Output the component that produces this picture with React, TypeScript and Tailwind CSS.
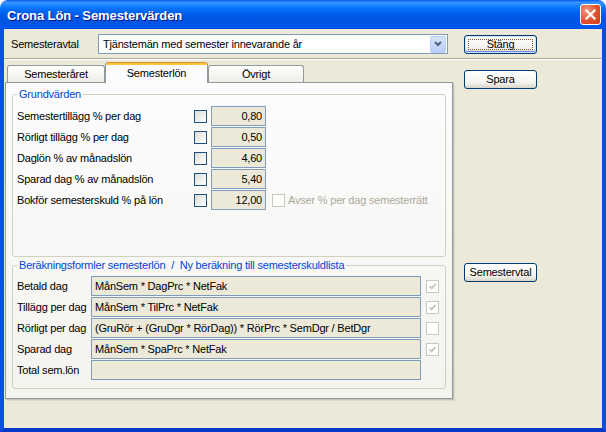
import React from 'react'

const font = "font-['Liberation_Sans',Arial,sans-serif]"

function Check({ disabled, checked }: { disabled?: boolean; checked?: boolean }) {
  if (disabled) {
    return (
      <span className="flex h-[13px] w-[13px] shrink-0 items-center justify-center border border-[#cac8bb] bg-white">
        {checked && (
          <svg width="9" height="9" viewBox="0 0 9 9">
            <path d="M1.5 4.2 L3.5 6.4 L7.6 2" stroke="#c4c2b4" strokeWidth="1.7" fill="none" />
          </svg>
        )}
      </span>
    )
  }
  return <span className="h-[13px] w-[13px] shrink-0 border border-[#1c5180] bg-[linear-gradient(135deg,#dcdcd7,#ffffff)]" />
}

function XpButton({ label, isDefault }: { label: string; isDefault?: boolean }) {
  return (
    <button
      className={
        isDefault
          ? 'relative flex h-[19px] w-[73px] items-center justify-center rounded-[3px] border border-[#003c74] bg-[linear-gradient(to_bottom,#ffffff,#f3f3ee_70%,#d8d3c7)] text-[11px] text-black shadow-[inset_0_0_0_1px_#cee7ff,inset_0_-1px_0_1px_#6982ee]'
          : 'flex h-[19px] w-[73px] items-center justify-center rounded-[3px] border border-[#003c74] bg-[linear-gradient(to_bottom,#ffffff,#f3f3ee_70%,#d8d3c7)] text-[11px] text-black'
      }
    >
      {isDefault && <span className="absolute inset-[3px] border border-dotted border-[#7a5a30]" />}
      <span className="relative tracking-[-0.2px]">{label}</span>
    </button>
  )
}

const grund = [
  { label: 'Semestertillägg % per dag', value: '0,80' },
  { label: 'Rörligt tillägg % per dag', value: '0,50' },
  { label: 'Daglön % av månadslön', value: '4,60' },
  { label: 'Sparad dag % av månadslön', value: '5,40' },
  { label: 'Bokför semesterskuld % på lön', value: '12,00', extra: true },
]

const formler = [
  { label: 'Betald dag', value: 'MånSem * DagPrc * NetFak', check: 'on' },
  { label: 'Tillägg per dag', value: 'MånSem * TilPrc * NetFak', check: 'on' },
  { label: 'Rörligt per dag', value: '(GruRör + (GruDgr * RörDag)) * RörPrc * SemDgr / BetDgr', check: 'off' },
  { label: 'Sparad dag', value: 'MånSem * SpaPrc * NetFak', check: 'on' },
  { label: 'Total sem.lön', value: '', check: 'none' },
]

export default function App() {
  return (
    <div className={`h-[432px] w-[606px] bg-white text-[11px] tracking-[-0.2px] text-black ${font}`}>
      <div className="flex h-full flex-col overflow-hidden rounded-t-[8px]">
        {/* title bar */}
        <div className="flex h-[29px] shrink-0 items-center justify-between bg-[linear-gradient(to_bottom,#0058ee_0%,#3a93ff_8%,#288eff_14%,#127dff_22%,#036ffc_32%,#0262ee_44%,#0057e5_60%,#0054e3_78%,#0055eb_90%,#005bf5_95%,#0046d5_100%)] pl-[7px] pr-[5px]">
          <span className="pt-[2px] text-[13px] font-bold tracking-[-0.1px] text-white [text-shadow:1px_1px_0_#0f1089]">
            Crona Lön - Semestervärden
          </span>
          <span className="flex h-[21px] w-[21px] items-center justify-center rounded-[3px] border border-white bg-[radial-gradient(circle_at_30%_30%,#f19a7c,#e0512c_55%,#c8401a)]">
            <svg width="11" height="11" viewBox="0 0 11 11">
              <path d="M1.5 1.5 L9.5 9.5 M9.5 1.5 L1.5 9.5" stroke="white" strokeWidth="2.2" strokeLinecap="square" />
            </svg>
          </span>
        </div>

        {/* client area */}
        <div className="flex flex-1 flex-col border-x-4 border-b-4 border-x-[#0851e6] border-b-[#0838c8] bg-[#ece9d8]">
          <div className="flex items-center pl-[7px] pt-[5px]">
            <span className="w-[87px]">Semesteravtal</span>
            <div className="flex h-[20px] w-[350px] items-center border border-[#7f9db9] bg-white pl-[4px] pr-[1px]">
              <span className="flex-1">Tjänstemän med semester innevarande år</span>
              <span className="flex h-[17px] w-[16px] items-center justify-center rounded-[2px] border border-[#b9cdf7] bg-[linear-gradient(to_bottom,#d8e4fc,#b8cdf8)]">
                <svg width="8" height="6" viewBox="0 0 8 6">
                  <path d="M1 1 L4 4 L7 1" stroke="#4d6185" strokeWidth="2" fill="none" />
                </svg>
              </span>
            </div>
            <div className="ml-[16px]">
              <XpButton label="Stäng" isDefault />
            </div>
          </div>

          <div className="mt-[4px] h-[2px] border-t border-b border-t-[#aca899] border-b-white" />

          <div className="flex">
            {/* tab control */}
            <div className="ml-[1px] flex w-[448px] flex-col">
              <div className="mt-[2px] flex h-[21px] items-end pl-[2px]">
                <div className="flex h-[18px] w-[98px] items-center justify-center rounded-t-[3px] border border-b-0 border-[#919b9c] bg-[linear-gradient(to_bottom,#ffffff,#ecebe5)]">
                  Semesteråret
                </div>
                <div className="relative z-10 flex h-[21px] w-[103px] flex-col rounded-t-[3px] border-x border-[#919b9c] bg-[#fcfcfe]">
                  <div className="h-[3px] rounded-t-[3px] border-t border-[#e68b2c] bg-[#ffc83c]" />
                  <div className="flex flex-1 items-center justify-center pb-[2px]">Semesterlön</div>
                </div>
                <div className="flex h-[18px] w-[96px] items-center justify-center rounded-t-[3px] border border-b-0 border-[#919b9c] bg-[linear-gradient(to_bottom,#ffffff,#ecebe5)]">
                  Övrigt
                </div>
              </div>

              <div className="-mt-[1px] flex h-[317px] flex-col gap-[2px] border border-[#919b9c] bg-[linear-gradient(to_bottom,#fcfcfe,#f4f3ee)] px-[6px] pt-[5px] shadow-[1px_1px_0_#c5c2b2,2px_2px_0_#dcd9cb]">
                <fieldset className="h-[169px] rounded-[3px] border border-[#d0d0bf] pl-[4px] pr-[4px] pt-[5px]">
                  <legend className="px-[2px] leading-[13px] text-[#0046d5]">Grundvärden</legend>
                  <div className="flex flex-col gap-[1px]">
                    {grund.map((r) => (
                      <div key={r.label} className="flex h-[20px] items-center">
                        <span className="w-[177px]">{r.label}</span>
                        <Check />
                        <div className="ml-[4px] flex h-[20px] w-[55px] items-center justify-end border border-[#7f9db9] bg-[#ece9d8] pr-[3px]">
                          {r.value}
                        </div>
                        {r.extra && (
                          <div className="ml-[6px] flex items-center gap-[3px] text-[#aca899]">
                            <Check disabled />
                            <span>Avser % per dag semesterrätt</span>
                          </div>
                        )}
                      </div>
                    ))}
                  </div>
                </fieldset>

                <fieldset className="h-[130px] rounded-[3px] border border-[#d0d0bf] pl-[4px] pr-[4px] pt-[4px]">
                  <legend className="px-[2px] leading-[13px] text-[#0046d5]">
                    Beräkningsformler semesterlön&nbsp; / &nbsp;Ny beräkning till semesterskuldlista
                  </legend>
                  <div className="flex flex-col gap-[1px]">
                    {formler.map((r) => (
                      <div key={r.label} className="flex h-[20px] items-center">
                        <span className="w-[74px]">{r.label}</span>
                        <div className="flex h-[20px] w-[330px] items-center border border-[#7f9db9] bg-[#ece9d8] pl-[3px]">
                          {r.value}
                        </div>
                        {r.check !== 'none' && (
                          <div className="ml-[5px]">
                            <Check disabled checked={r.check === 'on'} />
                          </div>
                        )}
                      </div>
                    ))}
                  </div>
                </fieldset>
              </div>
            </div>

            {/* right buttons */}
            <div className="ml-[11px] flex flex-col">
              <div className="mt-[10px]">
                <XpButton label="Spara" />
              </div>
              <div className="mt-[174px]">
                <XpButton label="Semestervtal" />
              </div>
            </div>
          </div>
        </div>
      </div>
    </div>
  )
}
